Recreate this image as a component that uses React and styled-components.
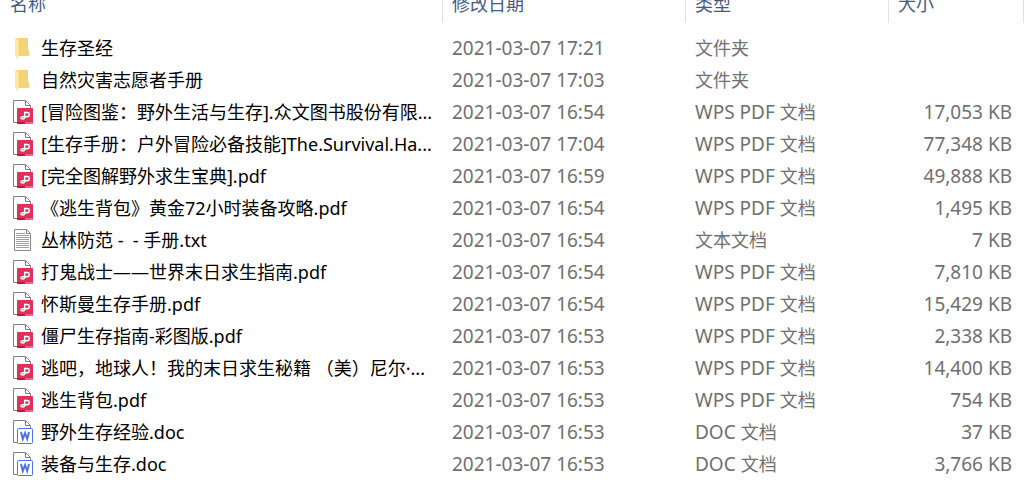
import React from "react";
import styled, { createGlobalStyle } from "styled-components";

const GlobalStyle = createGlobalStyle`
  body {
    margin: 0;
    background: #fff;
    font-family: "Noto Sans", "Noto Sans CJK SC", sans-serif;
    font-size: 18px;
    font-weight: 400;
    color: #000;
  }
`;

const FileTable = styled.table`
  width: 100%;
  table-layout: fixed;
  border-collapse: separate;
  border-spacing: 0;
`;

const Column = styled.col`
  width: ${(p) => p.$width || "auto"};
`;

const HeaderCell = styled.th`
  padding: 0 0 15px ${(p) => (p.$first ? "10px" : "9px")};
  border-right: 1px solid #e2e2e2;
  line-height: 8px;
  font-weight: 400;
  text-align: left;
  white-space: nowrap;
  color: #465b80;
`;

const Body = styled.tbody`
  &::before {
    content: "";
    display: block;
    height: 9px;
  }
`;

const Cell = styled.td`
  height: 32px;
  padding: 0 ${(p) => (p.$numeric ? "12px" : "0")} 0 9px;
  line-height: 32px;
  white-space: nowrap;
  text-align: ${(p) => (p.$numeric ? "right" : "left")};
  color: #707070;
`;

const NameCell = styled(Cell)`
  padding: 0 0 0 12px;
  color: #000;
`;

const Latin = styled.span`
  font-size: 19px;
`;

const FileName = styled.div`
  display: flex;
  align-items: center;
  gap: 5px;
  height: 32px;
  white-space: pre;
`;

const Icon = styled.svg`
  flex: none;
  width: 24px;
  height: 24px;
`;

const FolderIcon = () => (
  <Icon viewBox="0 0 24 24" aria-hidden="true">
    <path d="M4 2H16V13.500L17 14.500V20H5Z" fill="#f5d477" />
    <path d="M3 2L6.500 4.500V23L3 20.500Z" fill="#fee9a9" />
  </Icon>
);

const Page = () => (
  <path
    d="M5 22.500H1.500V.5H13.500L18.500 5.500V8M13.500 .5V5.500H18.500"
    fill="none"
    stroke="#7f7f7f"
  />
);

const PdfIcon = () => (
  <Icon viewBox="0 0 24 24" aria-hidden="true">
    <Page />
    <rect x="5" y="8" width="16" height="16" rx="1" fill="#e0315b" />
    <path d="M5 22H13V24H6Q5 24 5 23Z" fill="#c41246" />
    <path d="M13 22H21V23Q21 24 20 24H13Z" fill="#fb5c80" />
    <path
      d="M12.700 18V12.500H15Q17.300 12.500 17.300 14.600T15 16.700H10.500Q9 16.700 9 17.800T10.700 18.900Q12.700 18.900 12.700 17.500"
      fill="none"
      stroke="#fff"
      strokeWidth="1.500"
    />
  </Icon>
);

const DocIcon = () => (
  <Icon viewBox="0 0 24 24" aria-hidden="true">
    <Page />
    <rect x="5.500" y="8.500" width="15" height="15" rx="1" fill="#fff" stroke="#4a72f5" />
    <path
      d="M9 12L10.800 19L13 13L15.200 19L17 12"
      fill="none"
      stroke="#4a6df0"
      strokeWidth="1.900"
    />
  </Icon>
);

const TextIcon = () => (
  <Icon viewBox="0 0 24 24" aria-hidden="true">
    <path d="M2.500 1.500H14.500L18.500 5.500V22.500H2.500Z" fill="#fbfbfb" stroke="#8a8a8a" />
    <path d="M14.500 1.500V5.500H18.500" fill="none" stroke="#8a8a8a" />
    <path
      d="M4 5.500H13M4 7.500H17M4 9.500H17M4 11.500H17M4 13.500H17M4 15.500H17M4 17.500H17M4 19.500H17"
      stroke="#a0a0a0"
    />
  </Icon>
);

const kinds = {
  folder: { icon: FolderIcon, label: "文件夹" },
  pdf: { icon: PdfIcon, app: "WPS PDF", label: "文档" },
  txt: { icon: TextIcon, label: "文本文档" },
  doc: { icon: DocIcon, app: "DOC", label: "文档" },
};

const files = [
  ["folder", "生存圣经", "17:21", ""],
  ["folder", "自然灾害志愿者手册", "17:03", ""],
  ["pdf", "[冒险图鉴：野外生活与生存].众文图书股份有限...", "16:54", "17,053 KB"],
  ["pdf", "[生存手册：户外冒险必备技能]The.Survival.Ha...", "17:04", "77,348 KB"],
  ["pdf", "[完全图解野外求生宝典].pdf", "16:59", "49,888 KB"],
  ["pdf", "《逃生背包》黄金72小时装备攻略.pdf", "16:54", "1,495 KB"],
  ["txt", "丛林防范 -  - 手册.txt", "16:54", "7 KB"],
  ["pdf", "打鬼战士——世界末日求生指南.pdf", "16:54", "7,810 KB"],
  ["pdf", "怀斯曼生存手册.pdf", "16:54", "15,429 KB"],
  ["pdf", "僵尸生存指南-彩图版.pdf", "16:53", "2,338 KB"],
  ["pdf", "逃吧，地球人！我的末日求生秘籍 （美）尼尔·...", "16:53", "14,400 KB"],
  ["pdf", "逃生背包.pdf", "16:53", "754 KB"],
  ["doc", "野外生存经验.doc", "16:53", "37 KB"],
  ["doc", "装备与生存.doc", "16:53", "3,766 KB"],
];

const FileRow = ({ kind, name, time, size }) => {
  const { icon: KindIcon, app, label } = kinds[kind];
  return (
    <tr>
      <NameCell>
        <FileName>
          <KindIcon />
          <span>{name}</span>
        </FileName>
      </NameCell>
      <Cell>
        <Latin>2021-03-07 {time}</Latin>
      </Cell>
      <Cell>
        {app && <Latin>{app} </Latin>}
        {label}
      </Cell>
      <Cell $numeric>
        <Latin>{size}</Latin>
      </Cell>
    </tr>
  );
};

export default function App() {
  return (
    <>
      <GlobalStyle />
      <FileTable lang="zh-CN">
        <colgroup>
          <Column />
          <Column $width="243px" />
          <Column $width="203px" />
          <Column $width="135px" />
        </colgroup>
        <thead>
          <tr>
            <HeaderCell $first>名称</HeaderCell>
            <HeaderCell>修改日期</HeaderCell>
            <HeaderCell>类型</HeaderCell>
            <HeaderCell>大小</HeaderCell>
          </tr>
        </thead>
        <Body>
          {files.map(([kind, name, time, size]) => (
            <FileRow key={name} kind={kind} name={name} time={time} size={size} />
          ))}
        </Body>
      </FileTable>
    </>
  );
}
